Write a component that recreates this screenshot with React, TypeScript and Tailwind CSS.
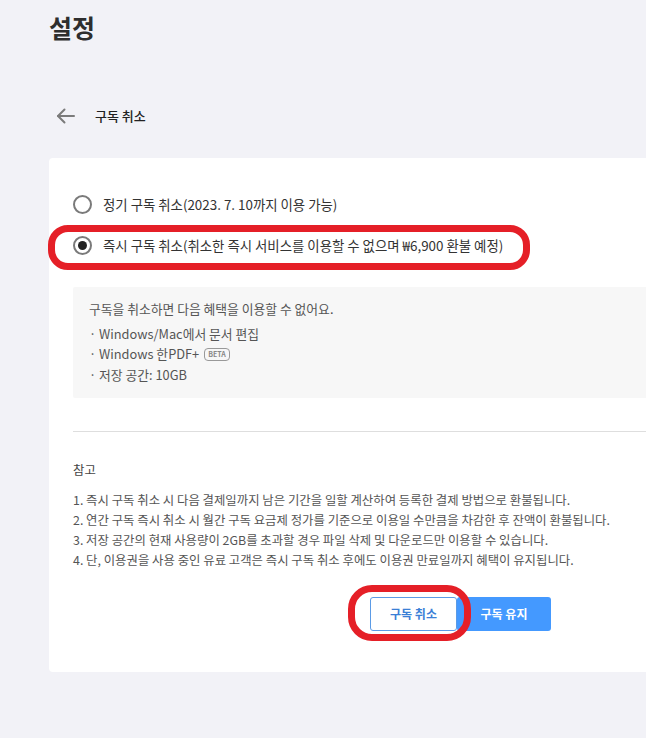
import React from "react";

const notes = [
  "1. 즉시 구독 취소 시 다음 결제일까지 남은 기간을 일할 계산하여 등록한 결제 방법으로 환불됩니다.",
  "2. 연간 구독 즉시 취소 시 월간 구독 요금제 정가를 기준으로 이용일 수만큼을 차감한 후 잔액이 환불됩니다.",
  "3. 저장 공간의 현재 사용량이 2GB를 초과할 경우 파일 삭제 및 다운로드만 이용할 수 있습니다.",
  "4. 단, 이용권을 사용 중인 유료 고객은 즉시 구독 취소 후에도 이용권 만료일까지 혜택이 유지됩니다.",
];

const Radio = ({ checked, label }: { checked?: boolean; label: string }) => (
  <div className="flex items-center h-[20px]">
    <span className="w-[19px] h-[19px] rounded-full border-2 border-[#7a7a7a] flex items-center justify-center">
      {checked && <span className="w-[9px] h-[9px] rounded-full bg-[#222]" />}
    </span>
    <span className="ml-[11px] text-[13.4px] text-[#333] whitespace-nowrap">{label}</span>
  </div>
);

const App = () => {
  return (
    <div
      className="w-[646px] h-[738px] bg-[#f2f2f7] overflow-hidden relative"
      style={{ fontFamily: '"Noto Sans CJK KR", "Noto Sans", sans-serif' }}
    >
      <h1 className="pl-[49px] pt-[9px] text-[25px] leading-[36px] font-bold text-[#2e2e2e]">설정</h1>

      <div className="flex items-center pl-[56px] mt-[58px] h-[26px]">
        <svg width="19" height="16" viewBox="0 0 19 16" fill="none" stroke="#7b7b7b" strokeWidth="2" strokeLinecap="round" strokeLinejoin="round">
          <path d="M18 8H2" />
          <path d="M8.5 1.5 2 8l6.5 6.5" />
        </svg>
        <span className="ml-[20px] text-[13px] font-medium text-[#222]">구독 취소</span>
      </div>

      <div className="ml-[49px] mt-[29px] bg-white rounded-l-[4px] h-[514px] pl-[24px] pt-[36px]">
        <Radio label="정기 구독 취소(2023. 7. 10까지 이용 가능)" />
        <div className="mt-[21px]">
          <Radio checked label="즉시 구독 취소(취소한 즉시 서비스를 이용할 수 없으며 ₩6,900 환불 예정)" />
        </div>

        <div className="mt-[32px] bg-[#f7f7f7] h-[111px] rounded-l-[2px] pl-[16px] pt-[12px] text-[12.8px] text-[#555]">
          <p className="leading-[20px]">구독을 취소하면 다음 혜택을 이용할 수 없어요.</p>
          <p className="leading-[20px] mt-[5px]">· Windows/Mac에서 문서 편집</p>
          <p className="leading-[20px] flex items-center">
            · Windows 한PDF+
            <span className="ml-[5px] border border-[#999] rounded-[4px] text-[7px] leading-[9px] px-[3px] py-[1px] text-[#888] font-semibold">BETA</span>
          </p>
          <p className="leading-[20px] mt-[1px]">· 저장 공간: 10GB</p>
        </div>

        <div className="mt-[33px] border-t border-[#dedede]" />

        <p className="mt-[29px] text-[12.4px] leading-[18px] text-[#444]">참고</p>
        <ul className="mt-[11px] text-[12.4px] text-[#555]">
          {notes.map((n, i) => (
            <li key={i} className="leading-[20px] whitespace-nowrap">{n}</li>
          ))}
        </ul>

        <div className="flex mt-[27px] ml-[297px]">
          <button className="w-[87px] h-[34px] border border-[#5b9be6] rounded-[3px] text-[12px] font-bold text-[#3b7fd6] bg-white">
            구독 취소
          </button>
          <button className="w-[94px] h-[34px] rounded-[3px] bg-[#4499ff] text-[12px] font-bold text-white">
            구독 유지
          </button>
        </div>
      </div>

      <div className="absolute left-[48px] top-[225px] w-[482px] h-[45px] border-[7px] border-[#e51f27] rounded-[20px] pointer-events-none" />
      <div className="absolute left-[348px] top-[585px] w-[123px] h-[56px] border-[7px] border-[#e51f27] rounded-[24px] pointer-events-none" />
    </div>
  );
};

export default App;
